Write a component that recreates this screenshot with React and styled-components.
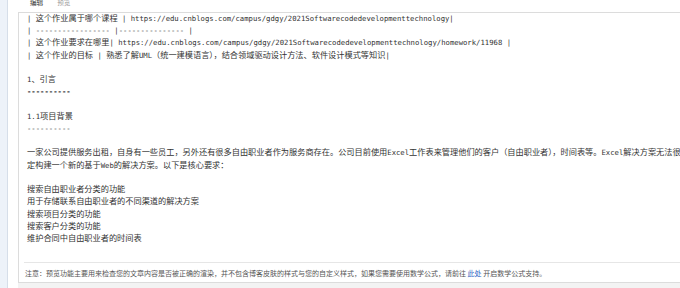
import React from "react";
import styled, { createGlobalStyle } from "styled-components";

const GlobalStyle = createGlobalStyle`
  html, body { margin: 0; padding: 0; background: #fff; overflow: hidden; }
  #root { width: 680px; height: 288px; }
`;

const Page = styled.div`
  display: flex;
  width: 680px;
  height: 288px;
  overflow: hidden;
  background: #fff;
`;

const SideStrip = styled.div`
  width: 7px;
  flex: none;
  background: #edf2f9;
  border-right: 1px solid #d6dee9;
`;

const Main = styled.div`
  flex: 1;
  min-width: 0;
  display: flex;
  flex-direction: column;
  padding-left: 10px;
`;

const TabBar = styled.div`
  height: 12px;
  box-sizing: border-box;
  flex: none;
  display: flex;
  align-items: flex-end;
  gap: 14px;
  padding: 0 0 5px 12px;
  overflow: hidden;
`;

const Tab = styled.span`
  font-family: "Noto Sans CJK SC", sans-serif;
  font-size: 6.6px;
  line-height: 9px;
  color: ${(p) => (p.$active ? "#333" : "#9a9a9a")};
`;

const Panel = styled.div`
  flex: none;
  height: 271px;
  box-sizing: border-box;
  border-top: 1px solid #dcdcdc;
  border-left: 1px solid #dcdcdc;
  border-bottom: 1px solid #dcdcdc;
  display: flex;
  flex-direction: column;
`;

const Editor = styled.div`
  height: 249px;
  flex: none;
  overflow: hidden;
  padding-left: 8px;
  font-family: "DejaVu Sans Mono", "Liberation Mono", monospace;
  font-size: 7.26px;
  color: #333;
`;

const Line = styled.div`
  height: 12.22px;
  line-height: 12.22px;
  white-space: pre;
  font-weight: ${(p) => (p.$bold ? 700 : 400)};
  color: ${(p) => (p.$bold ? "#222" : "#333")};
`;

const Han = styled.span`
  font-family: "Noto Sans CJK SC", sans-serif;
  font-size: 8.2px;
  line-height: 1;
`;

const NoteRow = styled.div`
  flex: 1;
  margin-left: 5px;
  border-top: 1px solid #e6e6e6;
  display: flex;
  align-items: center;
  padding-left: 1px;
  font-family: "Noto Sans CJK SC", sans-serif;
  font-size: 7px;
  color: #555;
  white-space: pre;
`;

const NoteLink = styled.span`
  color: #2b62c4;
`;

const Footer = styled.div`
  flex: 1;
  background: #f3f3f3;
`;

const CJK = /([\u3000-\u303f\u4e00-\u9fff\uff00-\uffef]+)/;

function Mixed({ text }) {
  return text.split(CJK).map((part, i) =>
    i % 2 === 1 ? <Han key={i}>{part}</Han> : part
  );
}

const lines = [
  { t: "| 这个作业属于哪个课程 | https://edu.cnblogs.com/campus/gdgy/2021Softwarecodedevelopmenttechnology|" },
  { t: "| ----------------- |--------------- |" },
  { t: "| 这个作业要求在哪里| https://edu.cnblogs.com/campus/gdgy/2021Softwarecodedevelopmenttechnology/homework/11968 |" },
  { t: "| 这个作业的目标 | 熟悉了解UML（统一建模语言），结合领域驱动设计方法、软件设计模式等知识|" },
  { t: "" },
  { t: "1、引言" },
  { t: "----------", bold: true },
  { t: "" },
  { t: "1.1项目背景" },
  { t: "----------" },
  { t: "" },
  { t: "一家公司提供服务出租，自身有一些员工，另外还有很多自由职业者作为服务商存在。公司目前使用Excel工作表来管理他们的客户（自由职业者），时间表等。Excel解决方案无法很好地满足需求，因此公司决" },
  { t: "定构建一个新的基于Web的解决方案。以下是核心要求：" },
  { t: "" },
  { t: "搜索自由职业者分类的功能" },
  { t: "用于存储联系自由职业者的不同渠道的解决方案" },
  { t: "搜索项目分类的功能" },
  { t: "搜索客户分类的功能" },
  { t: "维护合同中自由职业者的时间表" },
];

export default function App() {
  return (
    <>
      <GlobalStyle />
      <Page>
        <SideStrip />
        <Main>
          <TabBar>
            <Tab $active>编辑</Tab>
            <Tab>预览</Tab>
          </TabBar>
          <Panel>
            <Editor>
              {lines.map((l, i) => (
                <Line key={i} $bold={l.bold}>
                  <Mixed text={l.t} />
                </Line>
              ))}
            </Editor>
            <NoteRow>
              注意：预览功能主要用来检查您的文章内容是否被正确的渲染，并不包含博客皮肤的样式与您的自定义样式，如果您需要使用数学公式，请前往 <NoteLink>此处</NoteLink> 开启数学公式支持。
            </NoteRow>
          </Panel>
          <Footer />
        </Main>
      </Page>
    </>
  );
}
